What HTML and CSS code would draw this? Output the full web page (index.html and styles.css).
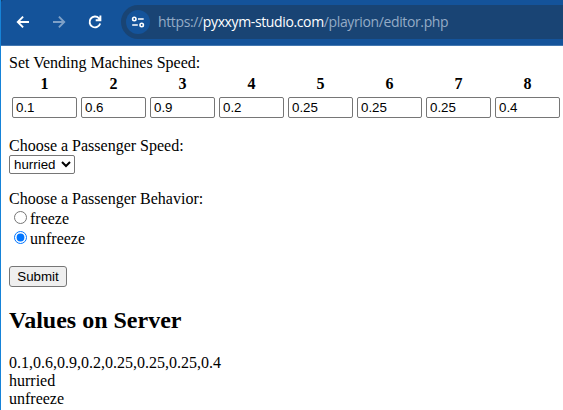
FILE: index.html
```html
<!DOCTYPE html>
<html lang="en">
<head>
<meta charset="utf-8">
<title>Editor</title>
<link rel="stylesheet" href="styles.css">
</head>
<body>
<header class="toolbar">
  <svg class="nav" width="16" height="16" viewBox="0 0 16 16"><path d="M14 8H3M8.1 2.7L2.8 8L8.1 13.3"/></svg>
  <svg class="nav disabled" width="16" height="16" viewBox="0 0 16 16"><path d="M2 8H13M7.9 2.7L13.2 8L7.9 13.3"/></svg>
  <svg class="nav" width="16" height="16" viewBox="0 0 16 16"><path d="M13.2 9.5A5.4 5.4 0 1 1 12 4.3L13.4 5.8M13.4 1.6V6.2H8.7"/></svg>
  <div class="address">
    <span class="site">
      <svg width="14" height="14" viewBox="0 0 14 14"><circle cx="3.3" cy="4" r="1.7"/><path d="M7 4H12.7M1.2 10H6.8"/><circle cx="10.7" cy="10" r="1.7"/></svg>
    </span>
    <span class="url">https://<b>pyxxym-studio.com</b>/playrion/editor.php</span>
  </div>
</header>
<main>
  <form>
    <div class="line">Set Vending Machines Speed:</div>
    <table>
      <tr><th>1</th><th>2</th><th>3</th><th>4</th><th>5</th><th>6</th><th>7</th><th>8</th></tr>
      <tr>
        <td><input type="text" value="0.1"></td>
        <td><input type="text" value="0.6"></td>
        <td><input type="text" value="0.9"></td>
        <td><input type="text" value="0.2"></td>
        <td><input type="text" value="0.25"></td>
        <td><input type="text" value="0.25"></td>
        <td><input type="text" value="0.25"></td>
        <td><input type="text" value="0.4"></td>
      </tr>
    </table>
    <div class="line">Choose a Passenger Speed:</div>
    <select><option>hurried</option></select>
    <div class="line">Choose a Passenger Behavior:</div>
    <label class="choice"><input type="radio" name="behavior">freeze</label>
    <label class="choice"><input type="radio" name="behavior" checked>unfreeze</label>
    <button type="button">Submit</button>
  </form>
  <h2>Values on Server</h2>
  <div class="line">0.1,0.6,0.9,0.2,0.25,0.25,0.25,0.4</div>
  <div class="line">hurried</div>
  <div class="line">unfreeze</div>
</main>
</body>
</html>
```
FILE: styles.css
```css
* { box-sizing: border-box; }
html { background: #fff; overflow: hidden; }
body {
  margin: 0;
  height: 410px;
  overflow: hidden;
  border-left: 1px solid #1683d8;
  font: 16px/18px "Liberation Serif", serif;
  color: #000;
}
.toolbar {
  display: flex;
  align-items: center;
  height: 46px;
  padding: 0 0 1px 14px;
  background: radial-gradient(circle at 5px 5px, transparent 5.5px, #163f68 6px) 0 0 / 5px 5px no-repeat #14539a;
  border-bottom: 1px solid #4377b0;
}
.nav {
  flex: none;
  margin-right: 20px;
  fill: none;
  stroke: #fff;
  stroke-width: 1.9;
}
.disabled { opacity: .45; }
.address {
  flex: 1;
  display: flex;
  align-items: center;
  height: 34px;
  margin-left: -2px;
  padding-left: 5px;
  background: #194474;
  border-radius: 17px 0 0 17px;
}
.site {
  display: flex;
  align-items: center;
  justify-content: center;
  width: 24px;
  height: 24px;
  border-radius: 50%;
  background: #14539a;
}
.site svg { fill: none; stroke: #fff; stroke-width: 1.6; }
.url {
  margin-left: 8px;
  font: 14px/20px "Open Sans", "Noto Sans", sans-serif;
  letter-spacing: -.37px;
  white-space: nowrap;
  color: #94abc6;
}
.url b { font-weight: 400; color: #fff; }
main { padding: 8px 0 0 8px; }
.line { height: 18px; white-space: nowrap; }
table { border-spacing: 2px; margin-bottom: 16px; }
th, td { padding: 1px; }
th { height: 20px; }
td input {
  display: block;
  width: 65px;
  height: 21px;
  padding: 1px 3px;
  border: 1px solid #767676;
  border-radius: 2px;
  font: 13.333px "Liberation Sans", sans-serif;
}
select {
  display: block;
  width: 66px;
  height: 19px;
  margin: 0 0 16px;
  border: 1px solid #767676;
  border-radius: 2px;
  background: #fff;
  font: 13.333px "Liberation Sans", sans-serif;
}
.choice { display: flex; height: 20px; padding-top: 2px; }
.choice input { width: 13px; height: 13px; margin: 1px 3px 0 5px; }
button {
  display: block;
  width: 58px;
  height: 21px;
  margin-top: 18px;
  padding: 0;
  border: 1px solid #767676;
  border-radius: 3px;
  background: #efefef;
  font: 13.333px "Liberation Sans", sans-serif;
}
h2 { margin: 20px 0; font-size: 24px; line-height: 27px; }
```
